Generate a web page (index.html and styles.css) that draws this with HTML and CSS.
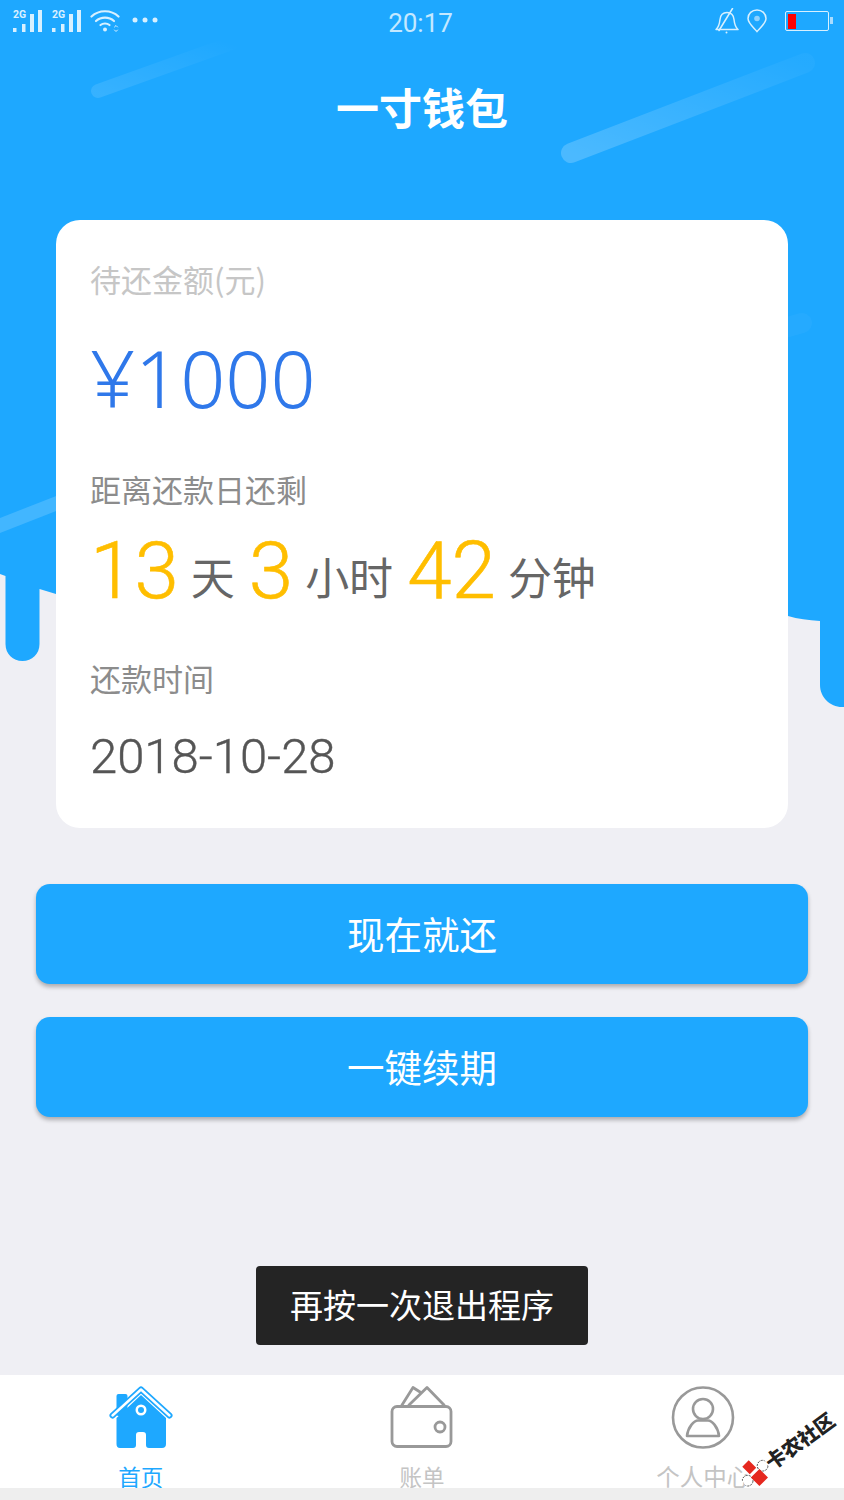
FILE: index.html
```html
<!DOCTYPE html>
<html lang="zh-CN">
<head>
<meta charset="utf-8">
<title>一寸钱包</title>
<link rel="stylesheet" href="styles.css">
</head>
<body>
<div class="page">
  <!-- Blue dripping backdrop with light streaks -->
  <svg class="backdrop" width="844" height="720" viewBox="0 0 844 720">
    <defs>
      <linearGradient id="streakA" x1="0" y1="1" x2="1" y2="0">
        <stop offset="0" stop-color="#fff" stop-opacity=".11"/>
        <stop offset="1" stop-color="#fff" stop-opacity="0"/>
      </linearGradient>
      <linearGradient id="streakB" x1="0" y1="1" x2="1" y2="0">
        <stop offset="0" stop-color="#fff" stop-opacity=".2"/>
        <stop offset="1" stop-color="#fff" stop-opacity=".03"/>
      </linearGradient>
    </defs>
    <path fill="#1ea8ff" d="M0 0H844V707H842C830 707 820 697 820 685V621C808 620 798 619 788 616L56 594L39.500 589V644C39.500 654 32 661 22.500 661C13 661 5.500 654 5.500 644V576L0 574Z"/>
    <path stroke="url(#streakA)" stroke-width="14" stroke-linecap="round" d="M98 91L232 43"/>
    <path stroke="url(#streakB)" stroke-width="20" stroke-linecap="round" d="M571 153L805 63"/>
    <path stroke="#fff" stroke-opacity=".16" stroke-width="14" d="M-4 527L60 502"/>
    <path stroke="#fff" stroke-opacity=".03" stroke-width="20" stroke-linecap="round" d="M770 332L802 323"/>
  </svg>

  <header class="status">
    <div class="status-left">
      <svg class="signal" width="31" height="24" viewBox="0 0 31 24"><text class="net" x="1" y="9">2G</text><path d="M1 19h3.500v4h-3.500zM10 15h3.500v8h-3.500zM18 5h4v18h-4zM26 1h4v22h-4z" fill="#d8f0ff"/></svg>
      <svg class="signal" width="31" height="24" viewBox="0 0 31 24"><text class="net" x="1" y="9">2G</text><path d="M1 19h3.500v4h-3.500zM10 15h3.500v8h-3.500zM18 5h4v18h-4zM26 1h4v22h-4z" fill="#d8f0ff"/></svg>
      <svg class="wifi" width="30" height="24" viewBox="0 0 30 24" fill="none" stroke="#d8f0ff" stroke-width="2.200" stroke-linecap="round"><path d="M1.500 7.500C9 .5 21 .5 28.500 7.500"/><path d="M6 12C11 7.500 19 7.500 24 12"/><path d="M10.500 16C13 14 17 14 19.500 16"/><circle cx="15" cy="20.500" r="2" fill="#d8f0ff" stroke="none"/><path d="M24.500 18l1.500-1.500 1.500 1.500M24.500 21l1.500 1.500 1.500-1.500" stroke-width="1"/></svg>
      <svg class="dots" width="26" height="6" viewBox="0 0 26 6" fill="#d8f0ff"><circle cx="3" cy="3" r="2.500"/><circle cx="13" cy="3" r="2.500"/><circle cx="23" cy="3" r="2.500"/></svg>
    </div>
    <div class="clock">20:17</div>
    <div class="status-right">
      <svg width="24" height="26" viewBox="0 0 24 26" fill="none" stroke="#d8f0ff" stroke-width="1.500" stroke-linejoin="round" stroke-linecap="round"><path d="M1 21.500C4 19 4.500 16 5 11.500C5.500 7 8 4.500 12 4.500C16 4.500 18.500 7 19 11.500C19.500 16 20 19 23 21.500Z"/><path d="M4 22.500L17.500 .5"/><circle cx="11.500" cy="24.500" r="1" fill="#d8f0ff" stroke="none"/></svg>
      <svg width="20" height="24" viewBox="0 0 20 24" fill="none" stroke="#d8f0ff" stroke-width="1.500"><path d="M10 22.500C6 18 1 14 1 9.500C1 4.500 5 1 10 1C15 1 19 4.500 19 9.500C19 14 14 18 10 22.500Z"/><circle cx="10" cy="9.500" r="2.800" fill="#8fd2ff" stroke="none"/></svg>
      <div class="battery"><span class="battery-level"></span></div>
    </div>
  </header>

  <h1 class="title">一寸钱包</h1>

  <section class="card">
    <div class="label label-light">待还金额(元)</div>
    <div class="amount">¥1000</div>
    <div class="label label-mid label-due">距离还款日还剩</div>
    <div class="countdown">
      <span class="num">13</span><span class="unit">天</span>
      <span class="num">3</span><span class="unit">小时</span>
      <span class="num">42</span><span class="unit">分钟</span>
    </div>
    <div class="label label-mid label-date">还款时间</div>
    <div class="date">2018-10-28</div>
  </section>

  <div class="actions">
    <button class="btn">现在就还</button>
    <button class="btn">一键续期</button>
  </div>

  <div class="toast">再按一次退出程序</div>

  <nav class="tabs">
    <a class="tab tab-active">
      <svg width="64" height="64" viewBox="0 0 64 64"><rect x="7.500" y="8" width="11" height="22" rx="2" fill="#1ea8ff"/><path fill="#1ea8ff" d="M7.500 32L32 9L57 32V58Q57 62 53 62H40Q37 62 37 59V49Q37 46 34 46H30Q27 46 27 49V59Q27 62 24 62H11Q7.500 62 7.500 58Z"/><path fill="none" stroke="#1ea8ff" stroke-width="6" stroke-linecap="round" stroke-linejoin="round" d="M3.500 29.500L32 3.500L60.500 29.500"/><path fill="none" stroke="#fff" stroke-width="2.400" stroke-linecap="round" stroke-linejoin="round" d="M3.500 29.500L32 3.500L60.500 29.500"/><circle cx="32" cy="24" r="5.500" fill="#fff"/><circle cx="32" cy="24" r="3" fill="#1ea8ff"/></svg>
      <span class="tab-label-short">首页</span>
    </a>
    <a class="tab">
      <svg width="64" height="64" viewBox="0 0 64 64" fill="none" stroke="#999" stroke-width="2.800" stroke-linejoin="round" stroke-linecap="round"><path d="M12 19L23 1.500L30 6"/><path d="M19 19L37 1.500L54 19"/><rect x="2" y="20.500" width="59" height="40" rx="5"/><circle cx="50" cy="41" r="5" fill="#fff"/></svg>
      <span class="tab-label-short">账单</span>
    </a>
    <a class="tab">
      <svg width="64" height="64" viewBox="0 0 64 64" fill="none" stroke="#999" stroke-width="2.600" stroke-linejoin="round"><circle cx="32" cy="31.500" r="30"/><circle cx="32" cy="23" r="10"/><path d="M16 50C17 41 23 34.500 27 34.500H37C41 34.500 47 41 48 50Z"/></svg>
      <span>个人中心</span>
    </a>
  </nav>

  <!-- Community stamp in the corner -->
  <div class="stamp">
    <svg width="30" height="30" viewBox="0 0 28 28"><g transform="rotate(36 14 14)"><circle cx="21" cy="7" r="5" fill="#fff" stroke="#333" stroke-width=".8" stroke-dasharray="2 1"/><circle cx="7" cy="21" r="5" fill="#fff" stroke="#333" stroke-width=".8" stroke-dasharray="2 1"/><path d="M2 8L8 2L15 9L9 15ZM14 14L18 10L26 18L18 26L10 18Z" fill="#e5281f"/></g></svg>
    <span>卡农社区</span>
  </div>
</div>
</body>
</html>
```

FILE: styles.css
```css
* {
  box-sizing: border-box;
}

html,
body {
  margin: 0;
  padding: 0;
}

body {
  font-family: "Noto Sans CJK SC", "Noto Sans", sans-serif;
}

.page {
  position: relative;
  width: 844px;
  height: 1500px;
  overflow: hidden;
  background: #efeff4;
  display: flex;
  flex-direction: column;
}

.backdrop {
  position: absolute;
  left: 0;
  top: 0;
}

.status {
  position: relative;
  height: 46px;
  display: flex;
  align-items: center;
  justify-content: space-between;
  padding: 0 15px 0 12px;
}

.status-left {
  width: 300px;
  display: flex;
  align-items: center;
  gap: 8px;
  height: 46px;
  padding-bottom: 4px;
}

.status-right {
  width: 300px;
  display: flex;
  align-items: center;
  justify-content: flex-end;
  gap: 8px;
  height: 46px;
  padding-bottom: 4px;
}

.net {
  font: 700 10.500px Roboto, sans-serif;
  fill: #d8f0ff;
}

.dots {
  margin-left: 4px;
  margin-bottom: 2px;
}

.clock {
  font: 400 26px/46px Roboto, sans-serif;
  color: #c4e8ff;
}

.battery {
  position: relative;
  width: 44px;
  height: 20px;
  margin-left: 10px;
  border: 1.500px solid #d8f0ff;
  border-radius: 2px;
  padding: 1.500px;
}

.battery::after {
  content: "";
  position: absolute;
  right: -5px;
  top: 5px;
  width: 3px;
  height: 7px;
  background: #a9dcff;
}

.battery-level {
  display: block;
  width: 8px;
  height: 100%;
  background: #f00;
}

.title {
  position: relative;
  margin: 31px 0 0;
  height: 63px;
  font-size: 43px;
  line-height: 58px;
  font-weight: 700;
  text-align: center;
  color: #fff;
}

.card {
  position: relative;
  margin: 80px 56px 0;
  height: 608px;
  padding: 39px 34px 0;
  background: #fff;
  border-radius: 24px;
}

.label {
  font-size: 31px;
  line-height: 40px;
}

.label-light {
  color: #c6c6c6;
}

.label-mid {
  color: #8c8c8c;
}

.label-due {
  margin-top: 46px;
}

.label-date {
  margin-top: 23px;
}

.amount {
  margin-top: 34px;
  font: 300 79px/90px "Noto Sans", sans-serif;
  color: #2f78ea;
}

.countdown {
  display: flex;
  align-items: baseline;
  height: 109px;
  margin-top: 17px;
  line-height: 90px;
}

.num {
  font: 300 80px/90px Roboto, sans-serif;
  -webkit-text-stroke: .6px #ffbe00;
  color: #ffbe00;
  margin-right: 12px;
}

.unit {
  font-size: 44px;
  color: #666;
  margin-right: 14px;
  transform: translateY(-3px);
}

.date {
  margin-top: 29px;
  font: 300 49px/60px Roboto, sans-serif;
  -webkit-text-stroke: .4px #555;
  color: #555;
}

.actions {
  position: relative;
  margin: 56px 36px 0;
  display: flex;
  flex-direction: column;
  gap: 33px;
}

.btn {
  height: 100px;
  border: 0;
  border-radius: 14px;
  padding: 0 0 4px;
  background: #1ea8ff;
  color: #fff;
  font-family: inherit;
  font-size: 37.500px;
  box-shadow: 0 3px 4px rgba(0, 0, 0, .28);
}

.toast {
  position: absolute;
  left: 256px;
  top: 1266px;
  width: 332px;
  height: 79px;
  border-radius: 4px;
  background: #242424;
  color: #fff;
  font-size: 33px;
  line-height: 76px;
  text-align: center;
}

.tabs {
  margin-top: auto;
  height: 125px;
  display: grid;
  grid-template-columns: repeat(3, 1fr);
  background: #fff;
  border-bottom: 12px solid #eee;
  overflow: hidden;
  position: relative;
}

.tab {
  display: flex;
  flex-direction: column;
  align-items: center;
  padding-top: 11px;
  font-size: 23.500px;
  line-height: 34px;
  color: #c4c4c4;
}

.tab svg {
  flex: none;
  margin-bottom: 9px;
}

.tab-label-short {
  font-size: 22.500px;
}

.tab-active {
  color: #1ea8ff;
}

.stamp {
  position: absolute;
  left: 743px;
  top: 1467px;
  display: flex;
  align-items: center;
  transform: rotate(-36deg);
  transform-origin: left center;
  font-weight: 900;
  font-size: 20px;
  line-height: 28px;
  color: #222;
  white-space: nowrap;
}
```
